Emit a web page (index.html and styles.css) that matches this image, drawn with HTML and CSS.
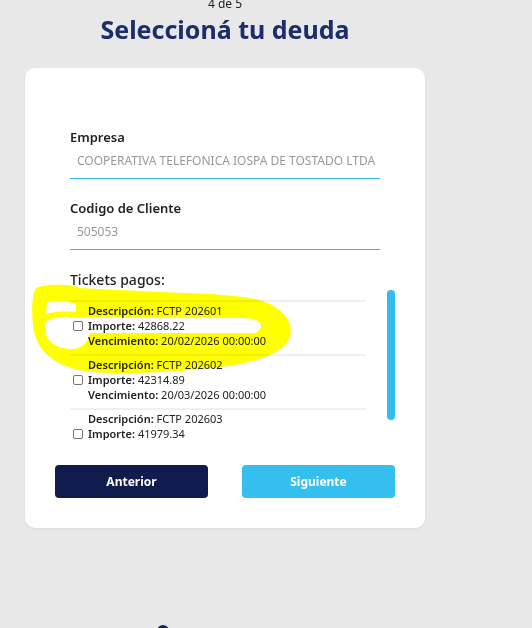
FILE: index.html
```html
<!DOCTYPE html>
<html lang="es">
<head>
<meta charset="utf-8">
<link rel="stylesheet" href="styles.css">
</head>
<body>
<div class="page">
  <div class="step">4 de 5</div>
  <h1 class="title">Seleccioná tu deuda</h1>
  <div class="card">
    <div class="field">
      <label class="label">Empresa</label>
      <div class="input">COOPERATIVA TELEFONICA IOSPA DE TOSTADO LTDA</div>
    </div>
    <div class="field">
      <label class="label">Codigo de Cliente</label>
      <div class="input">505053</div>
    </div>
    <div class="tickets-title">Tickets pagos:</div>
    <div class="list-wrap">
      <div class="list">
        <div class="item">
          <span class="check"></span>
          <div class="info">
            <div><b>Descripción:</b> FCTP 202601</div>
            <div><b>Importe:</b> 42868.22</div>
            <div><b>Vencimiento:</b> 20/02/2026 00:00:00</div>
          </div>
        </div>
        <div class="item">
          <span class="check"></span>
          <div class="info">
            <div><b>Descripción:</b> FCTP 202602</div>
            <div><b>Importe:</b> 42314.89</div>
            <div><b>Vencimiento:</b> 20/03/2026 00:00:00</div>
          </div>
        </div>
        <div class="item">
          <span class="check"></span>
          <div class="info">
            <div><b>Descripción:</b> FCTP 202603</div>
            <div><b>Importe:</b> 41979.34</div>
            <div><b>Vencimiento:</b> 20/04/2026 00:00:00</div>
          </div>
        </div>
      </div>
      <div class="scrollbar"></div>
    </div>
    <div class="buttons">
      <button class="btn btn-prev">Anterior</button>
      <button class="btn btn-next">Siguiente</button>
    </div>
  </div>
  <div class="bottom-mark"></div>
</div>
<svg class="marker" width="532" height="628" viewBox="0 0 532 628">
  <path fill="#ffff00" fill-rule="evenodd" d="
    M35 290 C 36 284, 70 283, 80 288 L 160 292 C 220 294, 250 296, 265 302 C 292 312, 298 335, 282 348 C 265 360, 240 366, 200 369 C 160 373, 110 375, 85 371 C 55 366, 36 352, 33 325 C 31 305, 33 295, 35 290 Z
    M47 302 C 55 301, 70 301, 76 304 L 76 312 C 62 311, 52 312, 46 314 Z
    M45 322 C 52 317, 62 316, 72 317 L 245 318 C 262 319, 266 328, 255 333 L 90 333 C 88 343, 82 349, 70 349 C 55 348, 47 341, 45 331 Z"/>
</svg>
</body>
</html>
```

FILE: styles.css
```css
* { box-sizing: border-box; }
html, body { margin: 0; padding: 0; }
body {
  background: #e8e8e8;
  font-family: "Noto Sans", "Open Sans", sans-serif;
  color: #222;
  width: 532px;
  height: 628px;
  overflow: hidden;
  position: relative;
}
.page {
  width: 400px;
  margin-left: 25px;
  display: flex;
  flex-direction: column;
  align-items: center;
}
.step {
  margin-top: -4px;
  font-size: 12px;
  line-height: 16px;
  color: #222;
}
.title {
  margin: 2px 0 0;
  font-size: 25px;
  line-height: 30px;
  font-weight: 700;
  color: #1b2d6b;
}
.card {
  margin-top: 24px;
  width: 400px;
  height: 460px;
  background: #fff;
  border-radius: 10px;
  box-shadow: 0 1px 3px rgba(0,0,0,0.06);
  padding: 60px 30px 0 45px;
  display: flex;
  flex-direction: column;
}
.field { display: flex; flex-direction: column; width: 310px; margin-bottom: 20px; }
.label {
  font-size: 13px;
  font-weight: 600;
  line-height: 18px;
  color: #222;
}
.input {
  margin-top: 4px;
  padding: 3px 7px 9px;
  font-size: 12px;
  line-height: 16px;
  color: #999;
  white-space: nowrap;
  overflow: hidden;
  border-bottom: 1.5px solid #36b8e6;
}
.tickets-title {
  font-size: 14px;
  font-weight: 500;
  line-height: 20px;
  color: #222;
}
.list-wrap {
  height: 150px;
  display: flex;
  gap: 21px;
  overflow: hidden;
}
.list { width: 296px; padding-top: 10px; display: flex; flex-direction: column; }
.item {
  border-top: 2px solid #f0f0f0;
  padding: 1px 0 6px 3px;
  display: flex;
  align-items: center;
  gap: 5px;
  flex: none;
}
.check {
  width: 10px; height: 10px;
  border: 1px solid #777;
  border-radius: 2px;
  flex: none;
}
.info { font-size: 11px; line-height: 15px; color: #222; }
.info b { font-weight: 600; }
.scrollbar {
  width: 8px;
  height: 130px;
  background: #33bdee;
  border-radius: 4px;
  flex: none;
}
.buttons {
  margin: 25px 0 0 -15px;
  display: flex;
  gap: 34px;
}
.btn {
  width: 153px;
  height: 33px;
  border: none;
  border-radius: 4px;
  color: #fff;
  font-family: "Noto Sans", sans-serif;
  font-size: 12px;
  font-weight: 700;
}
.btn-prev { background: #111c4e; }
.btn-next { background: #35bfee; }
.bottom-mark {
  margin-top: 97px;
  margin-right: 124px;
  width: 12px;
  height: 6px;
  border-radius: 6px 6px 0 0;
  background: #1b2350;
}
.marker {
  position: absolute;
  left: 0; top: 0;
  mix-blend-mode: multiply;
  pointer-events: none;
}
```
